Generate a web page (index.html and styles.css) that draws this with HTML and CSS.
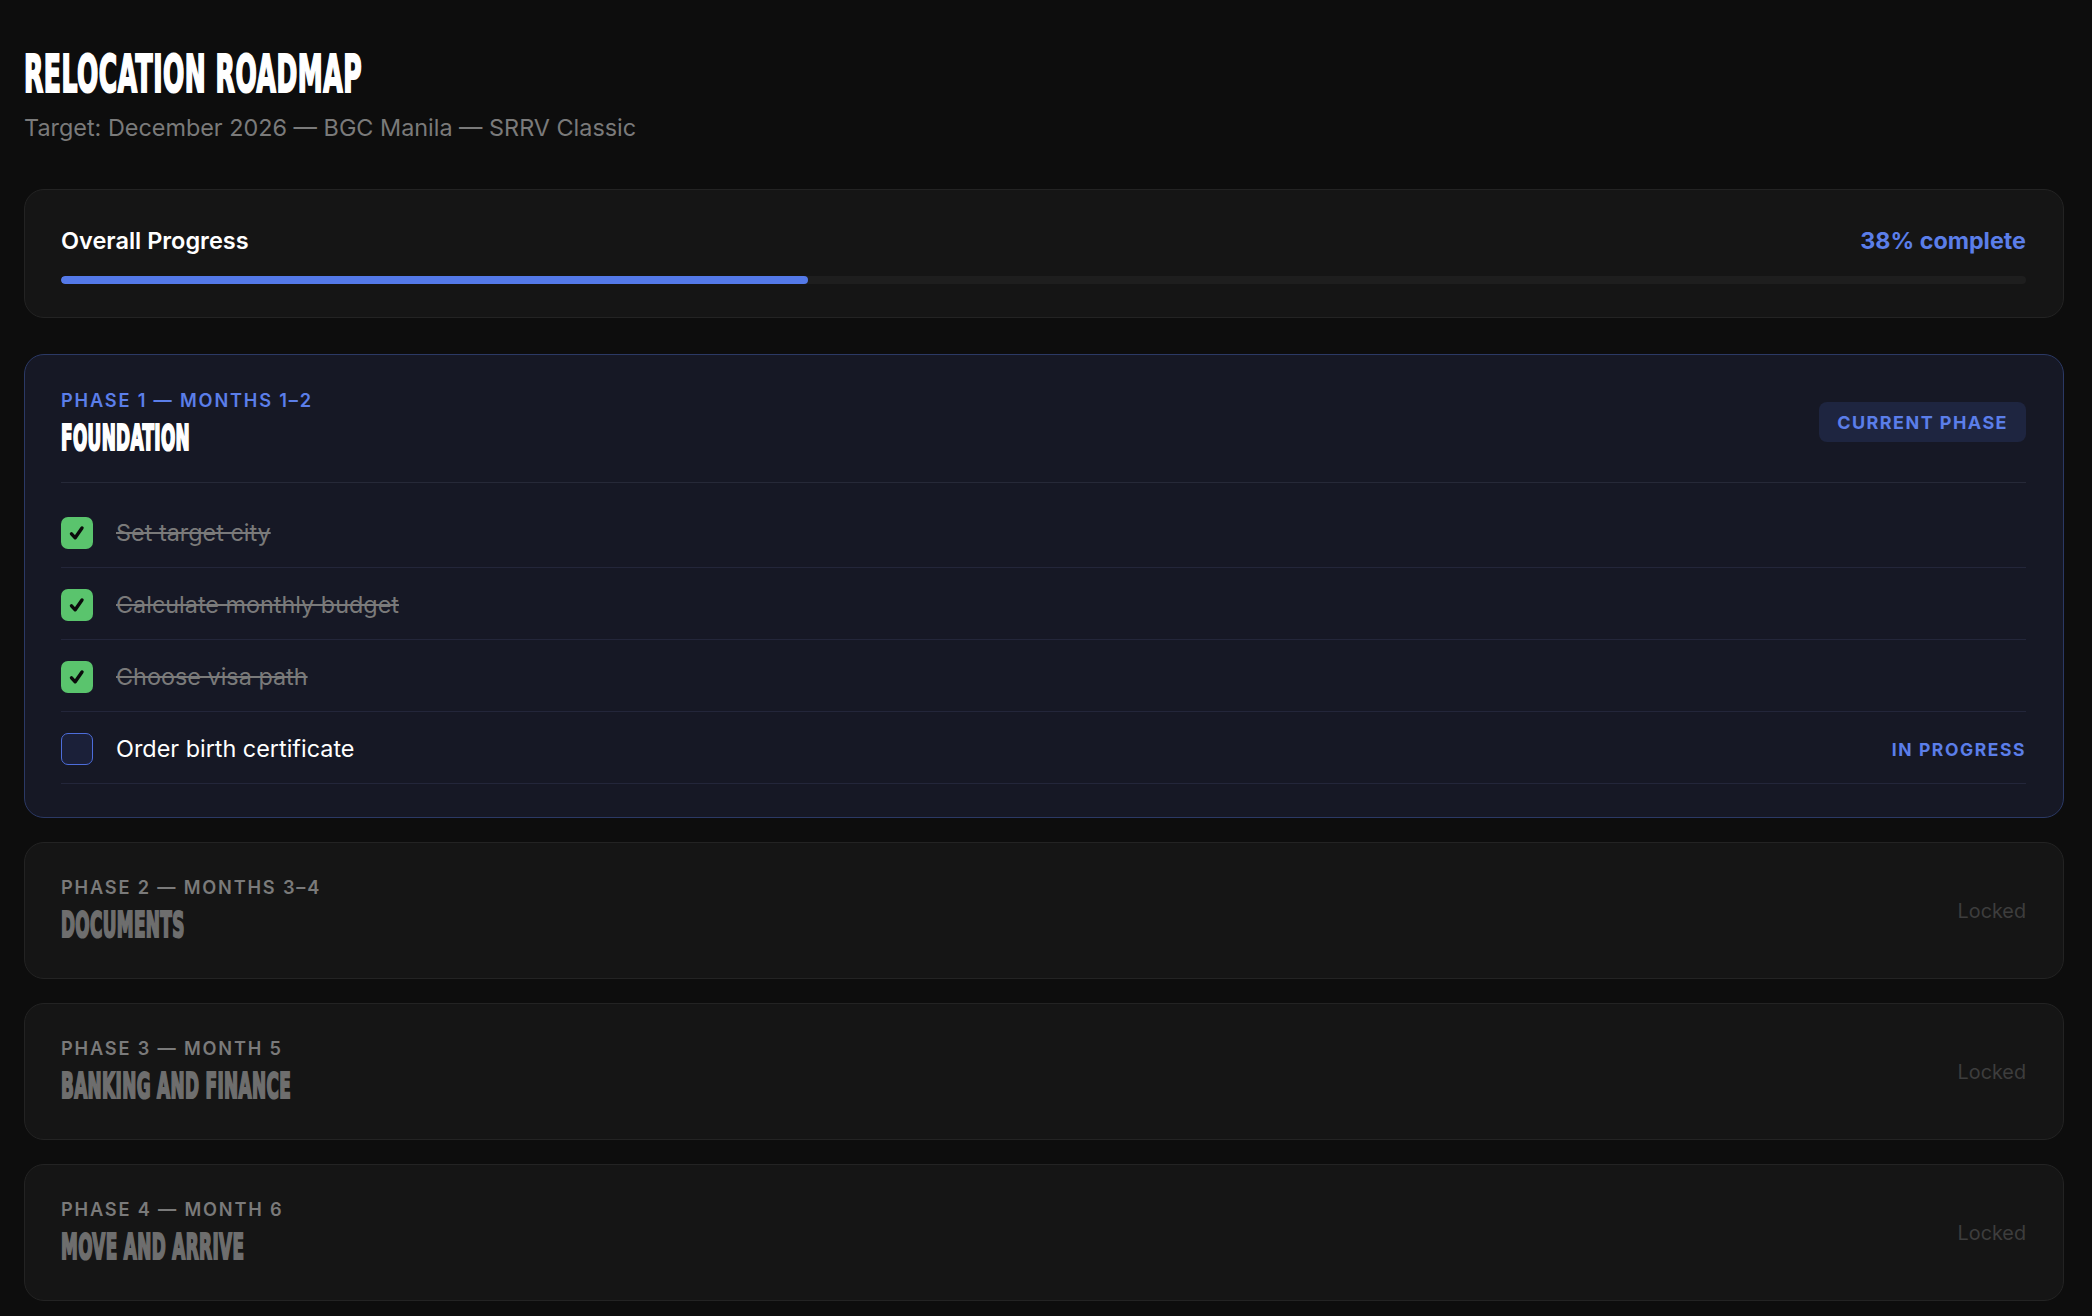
FILE: index.html
```html
<!DOCTYPE html>
<html lang="en">
<head>
<meta charset="utf-8">
<title>Relocation Roadmap</title>
<link rel="stylesheet" href="styles.css">
</head>
<body>
<main class="page">
  <header class="page-head">
    <h1 class="page-title"><span class="condensed">RELOCATION ROADMAP</span></h1>
    <p class="page-sub">Target: December 2026 — BGC Manila — SRRV Classic</p>
  </header>

  <section class="card progress-card">
    <div class="progress-top">
      <span class="progress-label">Overall Progress</span>
      <span class="progress-value">38% complete</span>
    </div>
    <div class="track"><div class="fill" style="width:38%"></div></div>
  </section>

  <div class="phases">
    <section class="card phase phase-current">
      <div class="phase-head">
        <div class="phase-titles">
          <div class="phase-label">PHASE 1 — MONTHS 1–2</div>
          <h2 class="phase-title"><span class="condensed">FOUNDATION</span></h2>
        </div>
        <span class="badge">CURRENT PHASE</span>
      </div>
      <ul class="tasks">
        <li class="task done">
          <span class="box"><svg viewBox="0 0 32 32" width="32" height="32"><polyline points="10.5,16.8 14.2,20.8 21,11" fill="none" stroke="#0b0b0b" stroke-width="3.4" stroke-linecap="round" stroke-linejoin="round"/></svg></span>
          <span class="task-text">Set target city</span>
        </li>
        <li class="task done">
          <span class="box"><svg viewBox="0 0 32 32" width="32" height="32"><polyline points="10.5,16.8 14.2,20.8 21,11" fill="none" stroke="#0b0b0b" stroke-width="3.4" stroke-linecap="round" stroke-linejoin="round"/></svg></span>
          <span class="task-text">Calculate monthly budget</span>
        </li>
        <li class="task done">
          <span class="box"><svg viewBox="0 0 32 32" width="32" height="32"><polyline points="10.5,16.8 14.2,20.8 21,11" fill="none" stroke="#0b0b0b" stroke-width="3.4" stroke-linecap="round" stroke-linejoin="round"/></svg></span>
          <span class="task-text">Choose visa path</span>
        </li>
        <li class="task active">
          <span class="box"></span>
          <span class="task-text">Order birth certificate</span>
          <span class="task-status">IN PROGRESS</span>
        </li>
      </ul>
    </section>

    <section class="card phase phase-locked">
      <div class="phase-titles">
        <div class="phase-label">PHASE 2 — MONTHS 3–4</div>
        <h2 class="phase-title"><span class="condensed">DOCUMENTS</span></h2>
      </div>
      <span class="locked">Locked</span>
    </section>

    <section class="card phase phase-locked">
      <div class="phase-titles">
        <div class="phase-label">PHASE 3 — MONTH 5</div>
        <h2 class="phase-title"><span class="condensed">BANKING AND FINANCE</span></h2>
      </div>
      <span class="locked">Locked</span>
    </section>

    <section class="card phase phase-locked">
      <div class="phase-titles">
        <div class="phase-label">PHASE 4 — MONTH 6</div>
        <h2 class="phase-title"><span class="condensed">MOVE AND ARRIVE</span></h2>
      </div>
      <span class="locked">Locked</span>
    </section>
  </div>
</main>
</body>
</html>
```

FILE: styles.css
```css
* { box-sizing: border-box; }

html, body {
  margin: 0;
  background: #0d0d0d;
}

body {
  font-family: "Inter", "Noto Sans", "Liberation Sans", sans-serif;
  color: #ffffff;
}

.page {
  padding: 44px 28px 16px 24px;
}

.page-head {
  margin-bottom: 46px;
}

.condensed {
  display: inline-block;
  font-family: "Liberation Sans Narrow", "DejaVu Sans Condensed", "Liberation Sans", sans-serif;
  font-weight: 700;
  transform: scaleX(0.535);
  transform-origin: 0 50%;
  white-space: nowrap;
  -webkit-text-stroke: 2.2px currentColor;
  letter-spacing: 0.02em;
}

.page-title {
  margin: 0;
  font-size: 52px;
  line-height: 60px;
  font-weight: 700;
  color: #ffffff;
}

.page-sub {
  margin: 9px 0 0;
  font-size: 23.4px;
  line-height: 30px;
  color: #7a7a7a;
}

.card {
  border: 1px solid #232323;
  background: #151515;
  border-radius: 20px;
}

.progress-card {
  padding: 35px 37px 33px 36px;
  margin-bottom: 36px;
}

.progress-top {
  display: flex;
  justify-content: space-between;
  align-items: center;
  height: 30px;
  margin-bottom: 21px;
}

.progress-label {
  font-size: 23.5px;
  font-weight: 600;
  color: #ffffff;
}

.progress-value {
  font-size: 23.3px;
  font-weight: 700;
  color: #5b7ee9;
}

.track {
  height: 8px;
  border-radius: 4px;
  background: #1e1e1e;
  overflow: hidden;
}

.fill {
  height: 100%;
  border-radius: 4px;
  background: #5479e8;
}

.phases {
  display: flex;
  flex-direction: column;
  gap: 24px;
}

.phase {
  padding: 35px 37px 33px 36px;
}

.phase-current {
  background: #161825;
  border-color: #2b3965;
}

.phase-locked {
  display: flex;
  align-items: center;
  justify-content: space-between;
  padding-top: 34px;
  padding-bottom: 33px;
}

.phase-head {
  display: flex;
  justify-content: space-between;
  align-items: flex-start;
  padding-bottom: 24px;
  border-bottom: 1px solid #262938;
  margin-bottom: 13px;
}

.phase-label {
  font-size: 18.2px;
  line-height: 20px;
  font-weight: 600;
  letter-spacing: 0.1em;
  color: #7a7a7a;
  margin-bottom: 7px;
}

.phase-current .phase-label {
  color: #5b7ee9;
}

.phase-title {
  margin: 0;
  font-size: 35px;
  line-height: 40px;
  color: #6e6e6e;
}

.phase-current .phase-title {
  color: #ffffff;
}

.badge {
  margin-top: 12px;
  padding: 0 18px;
  height: 40px;
  display: inline-flex;
  align-items: center;
  background: #1e2540;
  border-radius: 8px;
  color: #5b7ee9;
  font-size: 18px;
  font-weight: 700;
  letter-spacing: 0.08em;
}

.tasks {
  list-style: none;
  margin: 0;
  padding: 0;
}

.task {
  display: flex;
  align-items: center;
  gap: 23px;
  padding: 21px 0 18px;
  border-bottom: 1px solid #23263a;
}

.box {
  flex: 0 0 32px;
  width: 32px;
  height: 32px;
  border-radius: 7px;
  display: flex;
}

.task.done .box {
  background: #5ac46d;
}

.task.active .box {
  background: #1b2039;
  border: 1.5px solid #4d6ddb;
}

.task-text {
  font-size: 23.4px;
  line-height: 30px;
  flex: 1;
}

.task.done .task-text {
  color: #7a7a7a;
  text-decoration: line-through;
  text-decoration-thickness: 2px;
}

.task.active .task-text {
  color: #ffffff;
}

.task-status {
  font-size: 17.5px;
  font-weight: 700;
  letter-spacing: 0.09em;
  color: #5b7ee9;
}

.locked {
  font-size: 19.8px;
  color: #3d3d3d;
}
```
